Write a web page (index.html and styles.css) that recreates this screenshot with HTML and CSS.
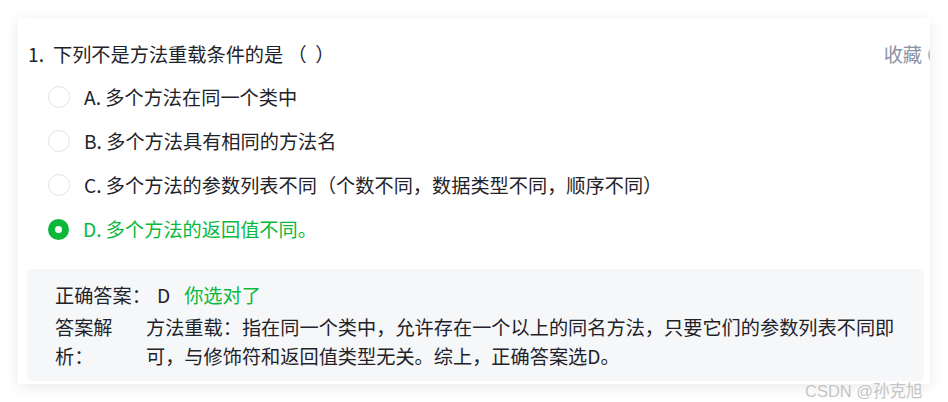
FILE: index.html
```html
<!DOCTYPE html>
<html lang="zh-CN">
<head>
<meta charset="utf-8">
<title>题目</title>
<link rel="stylesheet" href="styles.css">
</head>
<body>
<div class="card">
  <div class="q-head">
    <div class="q-title"><span class="q-no">1.</span>下列不是方法重载条件的是 （&nbsp; ）</div>
    <div class="fav"><span>收藏</span><span class="fav-icon"></span></div>
  </div>
  <ul class="options">
    <li class="opt"><span class="radio"></span><span class="opt-text">A. 多个方法在同一个类中</span></li>
    <li class="opt"><span class="radio"></span><span class="opt-text">B. 多个方法具有相同的方法名</span></li>
    <li class="opt"><span class="radio"></span><span class="opt-text">C. 多个方法的参数列表不同（个数不同，数据类型不同，顺序不同）</span></li>
    <li class="opt checked"><span class="radio"></span><span class="opt-text">D. 多个方法的返回值不同。</span></li>
  </ul>
  <div class="answer">
    <div class="ans-row"><span class="ans-label">正确答案：</span><span class="ans-key">D</span><span class="ans-ok">你选对了</span></div>
    <div class="ans-row explain"><span class="exp-label">答案解析：</span><span class="exp-text">方法重载：指在同一个类中，允许存在一个以上的同名方法，只要它们的参数列表不同即可，与修饰符和返回值类型无关。综上，正确答案选D。</span></div>
  </div>
</div>
<div class="watermark">CSDN @孙克旭</div>
</body>
</html>
```
FILE: styles.css
```css
html, body {
  margin: 0;
  padding: 0;
  background: #ffffff;
}
body {
  padding: 18px;
  font-family: "Noto Sans CJK SC", "Noto Sans", sans-serif;
  font-size: 19.2px;
  color: #1f2329;
}
.card {
  background: #ffffff;
  box-shadow: 0 3px 14px rgba(0, 0, 0, 0.09);
  padding: 22px 6px 3px 10px;
  overflow: hidden;
}
.q-head {
  display: flex;
  justify-content: space-between;
  align-items: center;
  line-height: 29px;
  margin-right: -22px;
}
.q-no {
  margin-right: 9px;
}
.fav {
  display: flex;
  align-items: center;
  gap: 6px;
  color: #8a93a5;
}
.fav-icon {
  width: 14px;
  height: 14px;
  border: 2px solid #b7bcc6;
  border-radius: 50%;
}
.options {
  list-style: none;
  margin: 6px 0 0 0;
  padding: 0 0 0 20px;
}
.opt {
  display: flex;
  align-items: center;
  height: 44px;
  gap: 14px;
}
.radio {
  width: 20px;
  height: 20px;
  border: 1px solid #e1e3e8;
  border-radius: 50%;
  background: #ffffff;
  box-sizing: content-box;
}
.checked .radio {
  width: 7px;
  height: 7px;
  border: 7.5px solid #0bb83b;
}
.checked .opt-text {
  color: #0bb83b;
}
.answer {
  margin-top: 18px;
  margin-left: -1px;
  background: #f6f7f9;
  border-radius: 5px;
  padding: 12px 28px 10px 28px;
}
.ans-row {
  display: flex;
  line-height: 29px;
}
.ans-key {
  margin-left: 6px;
}
.ans-ok {
  margin-left: 14px;
  color: #0bb83b;
}
.explain {
  margin-top: 3px;
}
.exp-label {
  flex: 0 0 64px;
  margin-right: 27px;
}
.exp-text {
  flex: 1;
}
.watermark {
  position: absolute;
  left: 805px;
  top: 378px;
  font-family: "Liberation Sans", "Noto Sans CJK SC", sans-serif;
  font-size: 16.5px;
  color: #c4c4c4;
  text-shadow: 0 0 2px #ffffff;
}
```
